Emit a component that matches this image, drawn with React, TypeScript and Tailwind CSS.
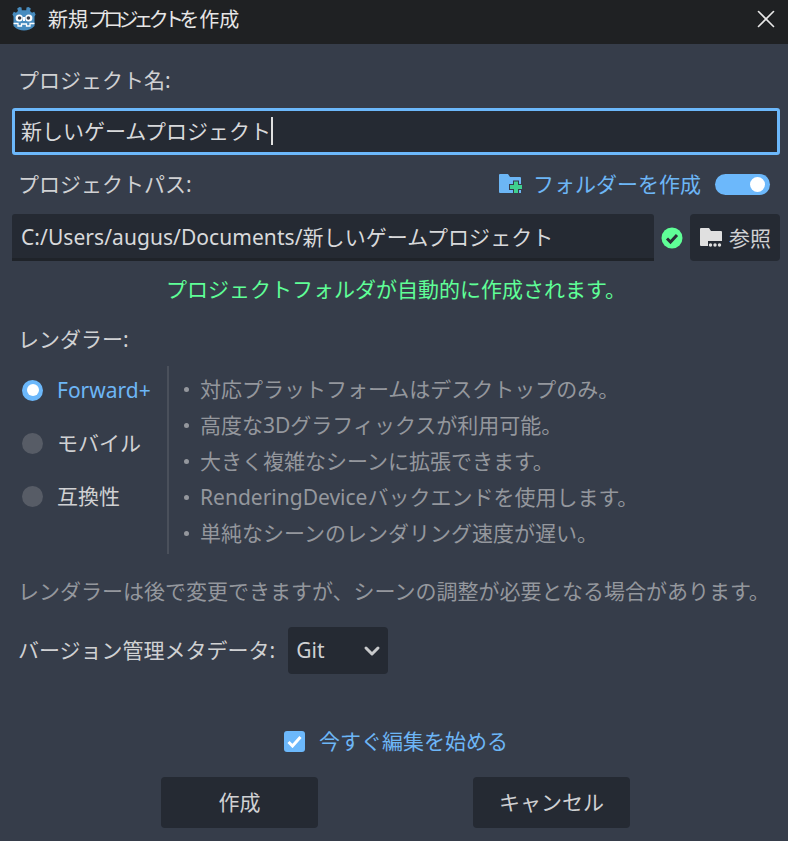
import { ChevronDown, X } from 'lucide-react';

const FONT = "font-['Noto_Sans','Noto_Sans_CJK_JP',sans-serif]";

const features = [
  '対応プラットフォームはデスクトップのみ。',
  '高度な3Dグラフィックスが利用可能。',
  '大きく複雑なシーンに拡張できます。',
  'RenderingDeviceバックエンドを使用します。',
  '単純なシーンのレンダリング速度が遅い。',
];

function GodotLogo() {
  return (
    <svg width="24" height="25" viewBox="0 0 24 25" className="mb-[7px]">
      <path
        d="M7.5 1 L9.5 1.6 L9.8 4.2 H14.2 L14.5 1.6 L16.5 1 L18.8 2.4 L18 5 L20 6.8 L22.2 5.8 L23.6 8.6 L22.5 10.6 V20 C19 23.5 16 24.6 12 24.6 C8 24.6 5 23.5 1.5 20 V10.6 L.4 8.6 L1.8 5.8 L4 6.8 L6 5 L5.2 2.4 Z"
        fill="#478cbf"
      />
      <circle cx="7.2" cy="12" r="3.6" fill="#fff" />
      <circle cx="16.8" cy="12" r="3.6" fill="#fff" />
      <circle cx="7.6" cy="12" r="1.8" fill="#3a3f4a" />
      <circle cx="16.4" cy="12" r="1.8" fill="#3a3f4a" />
      <rect x="11" y="11" width="2" height="4" fill="#fff" />
      <path d="M1.5 17.5 H6 V20 H9.5 V18 H14.5 V20 H18 V17.5 H22.5" fill="none" stroke="#fff" strokeWidth="1.3" />
    </svg>
  );
}

function FolderPlus() {
  return (
    <svg width="24" height="20" viewBox="0 0 24 20">
      <path d="M0 1 Q0 0 1 0 H9 L11 3 H21 Q22 3 22 4 V19 H1 Q0 19 0 18 Z" fill="#6cb6f5" />
      <path d="M10 10 H14 V6.5 H20 V10 H24 V16 H20 V20 H14 V16 H10 Z" fill="#363d4a" />
      <path d="M15 7.5 H19 V11 H23 V15 H19 V19 H15 V15 H11 V11 H15 Z" fill="#3fcf8e" />
    </svg>
  );
}

function FolderBrowse() {
  return (
    <svg width="22" height="19" viewBox="0 0 22 19">
      <path d="M0 1 Q0 0 1 0 H9 L11 3 H21 Q22 3 22 4 V13 H8 V18 H1 Q0 18 0 17 Z" fill="#e0e0e0" />
      <circle cx="10.5" cy="17" r="1.7" fill="#e0e0e0" />
      <circle cx="15" cy="17" r="1.7" fill="#e0e0e0" />
      <circle cx="19.5" cy="17" r="1.7" fill="#e0e0e0" />
    </svg>
  );
}

function StatusOk() {
  return (
    <svg width="22" height="22" viewBox="0 0 22 22">
      <circle cx="11" cy="11" r="10.5" fill="#5fff97" />
      <path d="M6 11.5 L9.5 15 L16 8" fill="none" stroke="#2a2f38" strokeWidth="3" />
    </svg>
  );
}

function Radio({ label, active }: { label: string; active?: boolean }) {
  return (
    <div className="flex items-center gap-[14px] h-[48px]">
      {active ? (
        <span className="w-[21px] h-[21px] rounded-full bg-[#6cb8fb] flex items-center justify-center">
          <span className="w-[12px] h-[12px] rounded-full bg-white" />
        </span>
      ) : (
        <span className="w-[21px] h-[21px] rounded-full bg-[#575c66]" />
      )}
      <span className={active ? 'text-[#6db6f6]' : 'text-[#d0d1d3]'}>{label}</span>
    </div>
  );
}

export default function App() {
  return (
    <div className={`${FONT} w-[788px] h-[841px] bg-[#363d4a] text-[21px] leading-[28px] text-[#d0d1d3] flex flex-col overflow-hidden`}>
      {/* Title bar */}
      <div className="h-[44px] shrink-0 bg-[#1f2123] flex items-center pl-[12px] pr-[7px]">
        <GodotLogo />
        <span className="ml-[12px] mb-[4px] text-[20px] text-[#e6e6e6] whitespace-nowrap">
          新規<span className="tracking-[-4.8px]">プロジェクト</span>を作成
        </span>
        <X className="ml-auto mb-[7px] text-[#e8e8e8]" size={30} strokeWidth={1.3} />
      </div>

      <div className="flex-1 flex flex-col pl-[12px] pr-[8px]">
        <div className="pl-[6px] mt-[23px] h-[28px] flex items-center pb-[2px]">プロジェクト名:</div>

        <div className="mt-[13px] h-[47px] bg-[#252a33] border-[3px] border-[#6cb8fb] rounded-[3px] flex items-center pl-[6px] pb-[2px] text-[#d8d9db]">
          新しいゲームプロジェクト
          <span className="w-[2px] h-[28px] bg-[#e0e0e0]" />
        </div>

        <div className="mt-[16px] h-[28px] flex items-center pl-[6px] pb-[2px]">
          <span>プロジェクトパス:</span>
          <span className="ml-auto flex items-center text-[#6db6f6]">
            <FolderPlus />
            <span className="ml-[10px]">フォルダーを作成</span>
          </span>
          <span className="ml-[14px] mr-[10px] w-[55px] h-[21px] rounded-full bg-[#6cb8fb] flex items-center justify-end pr-[5px]">
            <span className="w-[15px] h-[15px] rounded-full bg-white" />
          </span>
        </div>

        <div className="mt-[15px] h-[47px] flex items-center">
          <div className="w-[642px] h-full bg-[#252a33] border-b-[3px] border-[#1f2329] rounded-t-[3px] flex items-center pl-[9px] pt-[2px] tracking-[0.06px] text-[#d8d9db]">
            C:/Users/augus/Documents/新しいゲームプロジェクト
          </div>
          <span className="ml-[7px] flex">
            <StatusOk />
          </span>
          <div className="ml-[7px] w-[90px] h-full bg-[#252a33] rounded-[4px] flex items-center pl-[10px] gap-[7px]">
            <FolderBrowse />
            <span>参照</span>
          </div>
        </div>

        <div className="mt-[14px] w-[768px] h-[28px] text-center text-[#5fff97]">プロジェクトフォルダが自動的に作成されます。</div>

        <div className="pl-[6px] mt-[23px] h-[28px] flex items-center pb-[2px]">レンダラー:</div>

        <div className="mt-[12px] flex h-[188px]">
          <div className="w-[155px] pl-[10px] flex flex-col gap-[5px]">
            <Radio label="Forward+" active />
            <Radio label="モバイル" />
            <Radio label="互換性" />
          </div>
          <div className="w-[2px] bg-[#4a505b]" />
          <ul className="ml-[15px] pt-[5px] flex flex-col text-[#94979d]">
            {features.map((item) => (
              <li key={item} className="h-[36px] flex items-center">
                <span className="w-[5px] h-[5px] rounded-full bg-[#94979d] mr-[11px]" />
                {item}
              </li>
            ))}
          </ul>
        </div>

        <div className="pl-[6px] mt-[24px] h-[28px] flex items-center pb-[2px] whitespace-nowrap text-[#94979d]">
          レンダラーは後で変更できますが、シーンの調整が必要となる場合があります。
        </div>

        <div className="mt-[21px] h-[47px] flex items-center pl-[6px]">
          <span className="pb-[2px]">バージョン管理メタデータ:</span>
          <div className="ml-[13px] w-[100px] h-full bg-[#252a33] rounded-[4px] flex items-center pl-[8px] pr-[4px]">
            <span className="pb-[2px]">Git</span>
            <ChevronDown className="ml-auto text-[#c8c9cb]" size={24} strokeWidth={3} />
          </div>
        </div>

        <div className="mt-[53px] h-[28px] flex items-center pl-[272px]">
          <span className="w-[21px] h-[21px] rounded-[3px] bg-[#6cb8fb] flex items-center justify-center">
            <svg width="15" height="13" viewBox="0 0 15 13">
              <path d="M1.5 7 L5.5 11 L13.5 2" fill="none" stroke="#fff" strokeWidth="3" />
            </svg>
          </span>
          <span className="ml-[14px] text-[#6db6f6]">今すぐ編集を始める</span>
        </div>

        <div className="mt-[22px] h-[51px] flex pl-[149px] gap-[155px]">
          <div className="w-[157px] h-full bg-[#252a33] rounded-[4px] flex items-center justify-center pb-[2px]">作成</div>
          <div className="w-[157px] h-full bg-[#252a33] rounded-[4px] flex items-center justify-center pb-[2px]">キャンセル</div>
        </div>
      </div>
    </div>
  );
}
